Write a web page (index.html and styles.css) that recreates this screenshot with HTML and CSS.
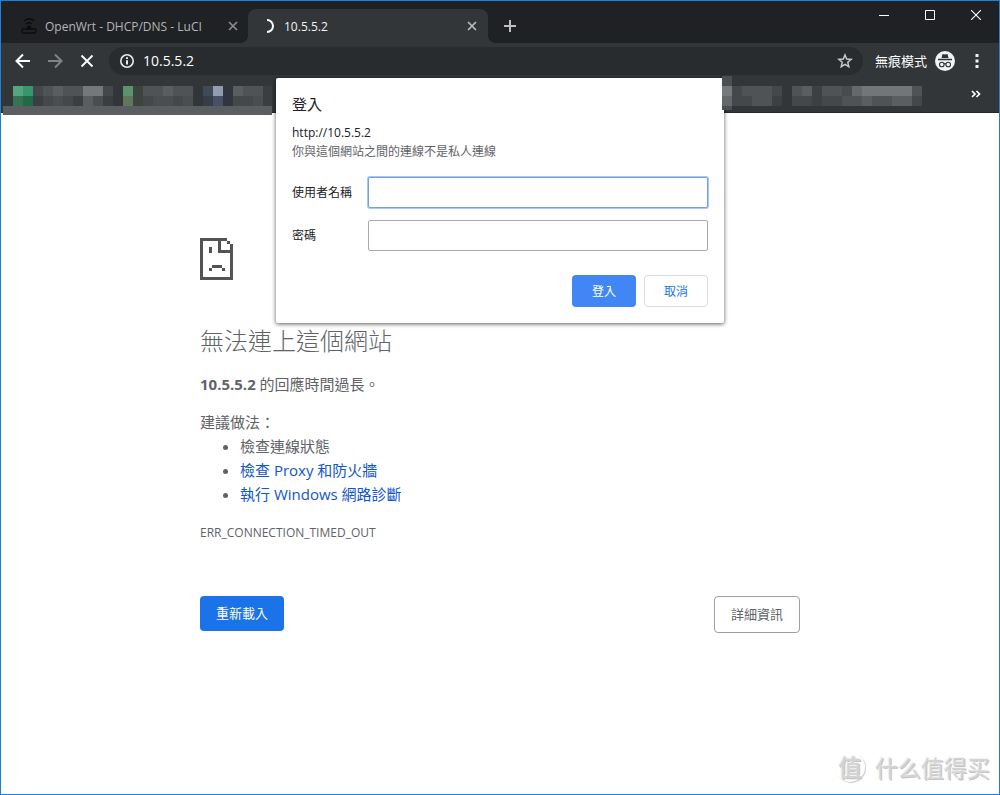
FILE: index.html
```html
<!DOCTYPE html>
<html lang="zh-Hant">
<head>
<meta charset="utf-8">
<title>10.5.5.2</title>
<link rel="stylesheet" href="styles.css">
</head>
<body>
<div class="window">
  <header class="chrome">
    <div class="titlebar">
      <div class="tab">
        <svg class="favicon" width="16" height="18" viewBox="0 0 16 18" fill="none" stroke="#0c0c0d" stroke-width="1.300"><path d="M3 4q5-4.500 10 0M5 7q3-2.500 6 0M8 8v4"/><rect x="1" y="12" width="14" height="4" rx="1.500"/><path d="M6.500 10h3v2h-3z" fill="#0c0c0d"/></svg>
        <span class="tab-title">OpenWrt - DHCP/DNS - LuCI</span>
        <button class="icon-btn tab-close" aria-label="關閉分頁"><svg width="10" height="10" viewBox="0 0 10 10" stroke="#8a8c8f" stroke-width="1.700"><path d="M1 1l8 8M9 1l-8 8"/></svg></button>
      </div>
      <div class="tab active">
        <svg class="favicon" width="16" height="16" viewBox="0 0 16 16" fill="none" stroke="#fff" stroke-width="2"><path d="M7 2a6 6 0 0 1 0 12"/></svg>
        <span class="tab-title">10.5.5.2</span>
        <button class="icon-btn tab-close" aria-label="關閉分頁"><svg width="10" height="10" viewBox="0 0 10 10" stroke="#b9bbbd" stroke-width="1.700"><path d="M1 1l8 8M9 1l-8 8"/></svg></button>
      </div>
      <button class="icon-btn new-tab" aria-label="新分頁"><svg width="12" height="12" viewBox="0 0 12 12" stroke="#bdbfc1" stroke-width="2"><path d="M6 0v12M0 6h12"/></svg></button>
      <div class="win-controls">
        <button class="icon-btn" aria-label="最小化"><svg width="10" height="10" viewBox="0 0 10 10" stroke="#fff"><path d="M0 5.500h10"/></svg></button>
        <button class="icon-btn" aria-label="最大化"><svg width="10" height="10" viewBox="0 0 10 10" stroke="#fff" fill="none"><path d="M.5.5h9v9h-9z"/></svg></button>
        <button class="icon-btn" aria-label="關閉"><svg width="10" height="10" viewBox="0 0 10 10" stroke="#fff" stroke-width="1.100"><path d="M0 0l10 10M10 0L0 10"/></svg></button>
      </div>
    </div>
    <div class="toolbar">
      <button class="icon-btn nav" aria-label="上一頁"><svg width="16" height="16" viewBox="0 0 16 16" stroke="#fff" stroke-width="2" fill="none"><path d="M15 8H2M8 1.500L1.500 8 8 14.500"/></svg></button>
      <button class="icon-btn nav" aria-label="下一頁"><svg width="16" height="16" viewBox="0 0 16 16" stroke="#808385" stroke-width="2" fill="none"><path d="M1 8h13M8 1.500L14.500 8 8 14.500"/></svg></button>
      <button class="icon-btn nav" aria-label="停止"><svg width="16" height="16" viewBox="0 0 16 16" stroke="#fff" stroke-width="1.800"><path d="M2.500 2.500l11 11M13.500 2.500l-11 11"/></svg></button>
      <div class="omnibox">
        <svg width="16" height="16" viewBox="0 0 16 16" fill="none" stroke="#e8eaed" stroke-width="1.600"><circle cx="8" cy="8" r="6.200"/><path d="M8 7.200v4.300M8 4.200v1.700" stroke-width="2"/></svg>
        <input class="url" aria-label="網址" value="10.5.5.2">
        <button class="icon-btn" aria-label="加入書籤"><svg width="16" height="16" viewBox="0 0 16 16" fill="none" stroke="#c8cacc" stroke-width="1.500"><path d="M8 2l1.700 4 4.500.4-3.400 2.900 1 4.300L8 11.300l-3.800 2.300 1-4.300L1.800 6.400 6.300 6z"/></svg></button>
      </div>
      <span class="incognito">無痕模式</span>
      <svg class="avatar" width="20" height="20" viewBox="0 0 20 20"><circle cx="10" cy="10" r="10" fill="#f1f3f4"/><path d="M6.500 7l1-4 2.500.6 2.500-.6 1 4zM3 7.800h14v1.400H3z" fill="#303336"/><g fill="none" stroke="#303336" stroke-width="1.100"><circle cx="6.800" cy="13.500" r="2.300"/><circle cx="13.200" cy="13.500" r="2.300"/><path d="M9 13q1-.8 2 0"/></g></svg>
      <button class="icon-btn menu" aria-label="選單"><svg width="4" height="14" viewBox="0 0 4 14" fill="#f1f3f4"><path d="M.5 0h3v3h-3zM.5 5.500h3v3h-3zM.5 11h3v3h-3z"/></svg></button>
    </div>
    <div class="bookmarks">
      <svg class="mosaic-left" width="269" height="29" viewBox="3 86 269 29" shape-rendering="crispEdges">
        <path fill="#5b5e61" d="M3 106h269v9H3z"/>
        <path fill="#55a581" d="M13 86h10v10H13z"/><path fill="#35986a" d="M23 86h10v10H23z"/><path fill="#3a7056" d="M13 96h10v10H13z"/><path fill="#22694a" d="M23 96h10v10H23z"/>
        <path fill="#45484b" d="M33 86h10v10H33zM103 86h10v10h-10zM43 96h10v10H43zM63 96h10v10H63zM143 96h10v10h-10zM173 96h10v10h-10zM233 96h20v10h-20z"/>
        <path fill="#505356" d="M43 86h10v10H43zM63 86h20v10H63zM143 86h20v10h-20zM173 86h20v10h-20zM243 86h20v10h-20z"/>
        <path fill="#5b5e61" d="M53 86h10v10H53zM163 86h10v10h-10zM233 86h10v10h-10zM83 96h10v10H83z"/>
        <path fill="#75787b" d="M83 86h20v10H83z"/>
        <path fill="#3a3e40" d="M33 96h10v10H33zM73 96h10v10H73zM103 96h10v10h-10zM263 86h9v20h-9z"/>
        <path fill="#4b4e50" d="M53 96h10v10H53zM93 96h10v10H93zM153 96h20v10h-20zM183 96h10v10h-10zM253 96h10v10h-10z"/>
        <path fill="#5a936c" d="M123 86h10v10h-10z"/><path fill="#5f785c" d="M123 96h10v10h-10z"/><path fill="#3d443f" d="M133 86h10v20h-10z"/>
        <path fill="#404a57" d="M203 86h10v10h-10z"/><path fill="#929bb0" d="M213 86h10v10h-10z"/><path fill="#30353f" d="M223 86h10v20h-10z"/><path fill="#363d49" d="M203 96h10v10h-10z"/><path fill="#475065" d="M213 96h10v10h-10z"/>
      </svg>
      <button class="icon-btn more" aria-label="更多書籤"><svg width="10" height="8" viewBox="0 0 10 8" fill="none" stroke="#fff" stroke-width="1.700"><path d="M1 1l3 3-3 3M5.500 1l3 3-3 3"/></svg></button>
    </div>
  </header>

  <main class="page">
    <svg class="sad" width="34" height="42" viewBox="0 0 34 42" shape-rendering="crispEdges" fill="#535353"><path d="M0 0h27v3H3v36h27V15H18V0h3v12h9V9h3v33H0zM27 3h3v3h-3zM30 6h3v3h-3zM9 9h3v6H9zM12 27h10v3H12zM9 30h3v3H9zM22 30h3v3h-3z"/></svg>
    <h1>無法連上這個網站</h1>
    <p class="summary"><strong>10.5.5.2</strong> 的回應時間過長。</p>
    <p class="suggest">建議做法：</p>
    <ul>
      <li>檢查連線狀態</li>
      <li><a href="#">檢查 Proxy 和防火牆</a></li>
      <li><a href="#">執行 Windows 網路診斷</a></li>
    </ul>
    <p class="code">ERR_CONNECTION_TIMED_OUT</p>
    <div class="actions">
      <button class="reload">重新載入</button>
      <button class="details">詳細資訊</button>
    </div>
  </main>

  <form class="dialog" role="dialog" aria-labelledby="dlg">
    <h2 id="dlg">登入</h2>
    <p class="origin">http://10.5.5.2</p>
    <p class="warn">你與這個網站之間的連線不是私人連線</p>
    <div class="fields">
      <label for="user">使用者名稱</label><input id="user" class="focused" type="text">
      <label for="pass">密碼</label><input id="pass" type="password">
    </div>
    <div class="dialog-actions">
      <button type="button" class="primary">登入</button>
      <button type="button" class="secondary">取消</button>
    </div>
  </form>

  <svg class="mosaic-right" width="200" height="34" viewBox="722 76 200 34" shape-rendering="crispEdges">
    <path fill="#4b4f52" d="M722 76h10v34h-10z"/><path fill="#76787a" d="M722 86h10v10h-10z"/><path fill="#64686b" d="M722 96h10v10h-10z"/>
    <path fill="#44484a" d="M732 86h10v10h-10zM772 86h10v10h-10zM732 96h20v10h-20zM792 96h20v10h-20zM822 96h20v10h-20zM852 96h10v10h-10zM912 96h10v10h-10z"/>
    <path fill="#505356" d="M742 86h30v10h-30zM792 86h10v10h-10zM822 86h20v10h-20zM752 96h20v10h-20zM842 96h20v10h-20zM882 96h10v10h-10zM912 86h10v10h-10z"/>
    <path fill="#5b5e61" d="M802 86h10v10h-10zM862 96h10v10h-10zM892 96h20v10h-20z"/><path fill="#505356" d="M872 96h10v10h-10z"/>
    <path fill="#3c4043" d="M812 86h10v20h-10zM772 96h10v10h-10z"/><path fill="#494c4f" d="M842 86h10v10h-10z"/>
    <path fill="#66696c" d="M852 86h10v10h-10z"/><path fill="#737679" d="M862 86h50v10h-50z"/>
  </svg>

  <div class="watermark">
    <span class="seal">值</span><span>什么值得买</span>
  </div>
</div>
</body>
</html>
```
FILE: styles.css
```css
* { box-sizing: border-box; }
body { margin: 0; font-family: "Open Sans", "Noto Sans CJK TC", sans-serif; }
h1, h2, p, ul { margin: 0; padding: 0; font-weight: 400; }
button, input { font: inherit; margin: 0; }
svg { display: block; flex: none; }
.window { position: relative; min-height: 100vh; border: 1px solid #1883d7; background: #fff; overflow: hidden; }
.icon-btn { display: flex; align-items: center; justify-content: center; padding: 0; border: 0; background: none; flex: none; }

.chrome { background: #323639; height: 112px; border-bottom: 1px solid #242628; }
.titlebar { display: flex; align-items: flex-end; height: 42px; background: #202124; }
.tab { display: flex; align-items: center; width: 247px; height: 34px; padding: 0 7px 0 20px; gap: 8px; font-size: 12px; line-height: 20px; color: #b4b6b9; }
.tab .tab-title { flex: 1; white-space: nowrap; padding-top: 2px; }
.tab.active { position: relative; width: 240px; padding-left: 12px; padding-right: 8px; background: #323639; color: #f1f3f4; border-radius: 8px 8px 0 0; }
.tab.active::before, .tab.active::after { content: ""; position: absolute; bottom: 0; width: 8px; height: 8px; }
.tab.active::before { right: 100%; background: radial-gradient(circle at 0 0, #202124 8px, #323639 8px); }
.tab.active::after { left: 100%; background: radial-gradient(circle at 100% 0, #202124 8px, #323639 8px); }
.tab-close { width: 16px; height: 16px; }
.new-tab { width: 28px; height: 34px; margin-left: 8px; }
.win-controls { display: flex; align-self: flex-start; margin-left: auto; }
.win-controls .icon-btn { width: 46px; height: 28px; }

.toolbar { display: flex; align-items: center; height: 36px; padding: 0 14px 0 8px; }
.nav { width: 28px; height: 28px; margin-right: 4px; }
.omnibox { display: flex; align-items: center; flex: 1; height: 28px; margin-left: 4px; padding: 0 10px; gap: 8px; border-radius: 14px; background: #282c2f; }
.url { flex: 1; min-width: 0; padding: 0; border: 0; outline: 0; background: none; color: #fff; font-size: 14px; line-height: 20px; }
.incognito { margin: 0 8px 0 12px; font-size: 13px; line-height: 20px; color: #fff; }
.menu { width: 16px; height: 28px; margin-left: 14px; }
.bookmarks { display: flex; justify-content: space-between; height: 33px; padding: 7px 18px 0 2px; }
.more { height: 16px; }

.page { max-width: 600px; margin: 0 auto; padding-top: 125px; color: #5f6368; font-size: 15px; line-height: 24px; }
h1 { margin-top: 45px; font-size: 24px; line-height: 32px; font-weight: 300; }
.summary { margin-top: 15px; }
.summary strong { font-weight: 700; }
.suggest { margin-top: 14px; }
ul { padding-left: 40px; }
a { color: #1155cc; text-decoration: none; }
.code { margin-top: 17px; font-size: 12px; line-height: 20px; }
.actions { display: flex; justify-content: space-between; align-items: flex-start; margin-top: 53px; }
.actions button { padding: 8px 16px; border-radius: 4px; font-size: 13px; line-height: 19px; }
.reload { border: 0; background: #1a73e8; color: #fff; }
.details { border: 1px solid #9aa0a6; background: #fff; color: #5f6368; }

.dialog { position: absolute; top: 77px; left: 0; right: 0; width: 448px; margin: 0 auto; padding: 16px; border-radius: 2px; background: #fff; color: #202124; box-shadow: 0 1px 4px rgba(0,0,0,.65); font-size: 12px; line-height: 19px; }
h2 { font-size: 15px; line-height: 20px; }
.origin { margin-top: 9px; }
.warn { color: #5f6368; }
.fields { display: grid; grid-template-columns: 60px 1fr; gap: 12px 16px; align-items: center; margin-top: 16px; }
.fields input { height: 31px; width: 100%; padding: 0 8px; border: 1px solid #aaa; border-radius: 2px; outline: 0; background: #fff; }
.fields .focused { border-color: #7a9fe0; box-shadow: 0 0 0 1px #a8c7fa; }
.dialog-actions { display: flex; justify-content: flex-end; gap: 8px; margin-top: 24px; }
.dialog-actions button { width: 64px; height: 32px; padding: 0; border-radius: 4px; }
.primary { border: 0; background: #4285f4; color: #fff; }
.secondary { border: 1px solid #dadce0; background: #fff; color: #1a73e8; }

.mosaic-right { position: absolute; top: 75px; left: 721px; }
.watermark { position: absolute; right: 9px; bottom: 11px; display: flex; align-items: center; gap: 10px; font-family: "Noto Sans CJK SC", sans-serif; font-size: 23px; line-height: 32px; color: #d4d4d4; text-shadow: -1px -1px 0 #f4f4f4, 1px 1px 0 #c4c4c4; }
.seal { width: 30px; height: 30px; border-radius: 50%; box-shadow: 1px 1px 1px #ccc; text-align: center; line-height: 28px; font-weight: 700; }
```
